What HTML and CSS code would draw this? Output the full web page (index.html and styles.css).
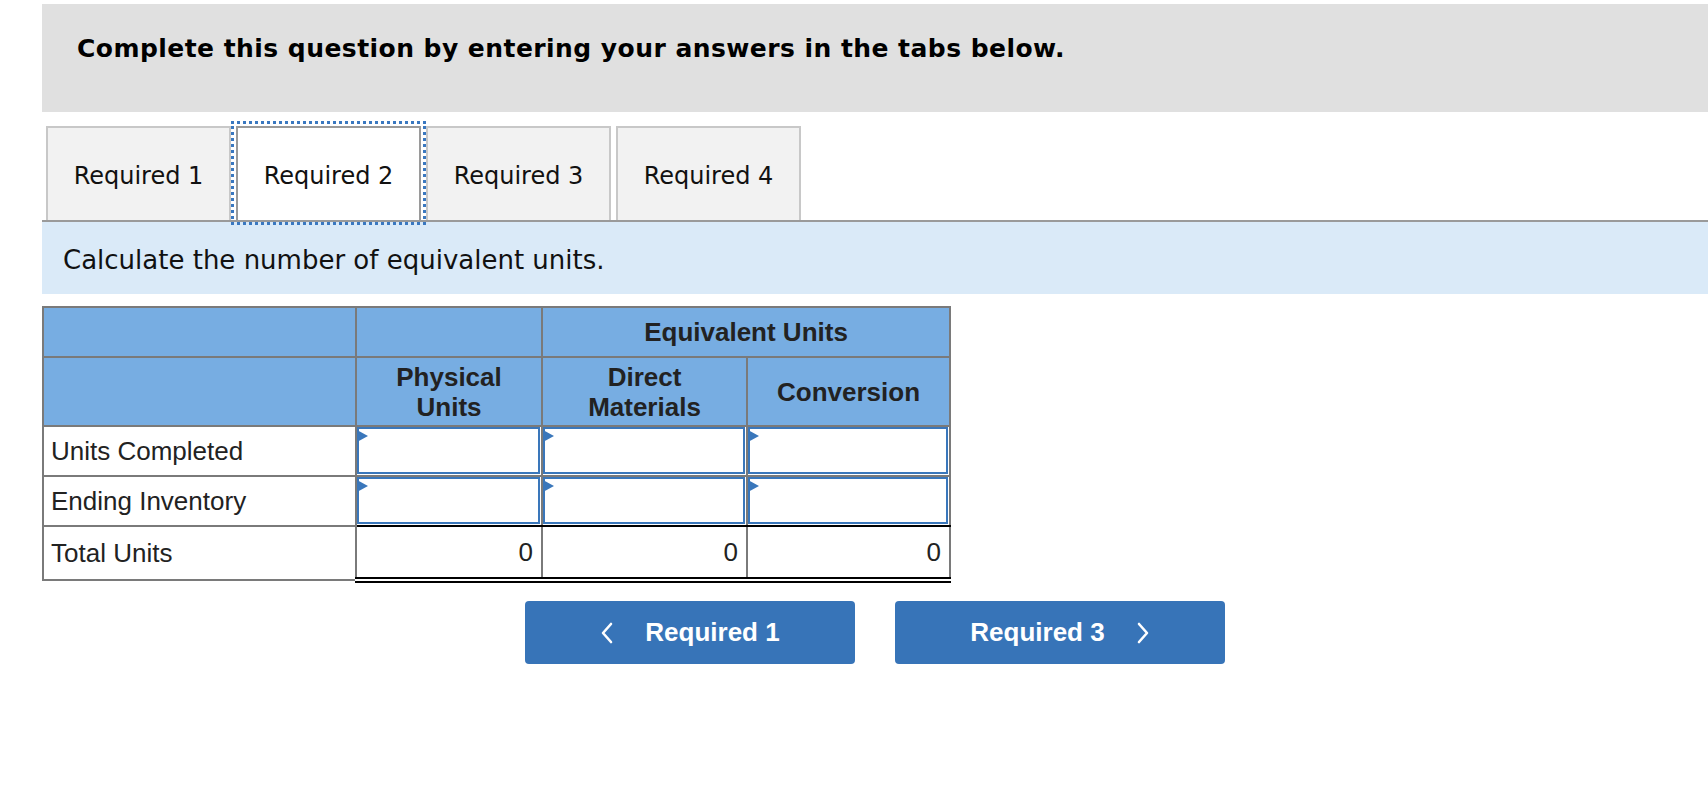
FILE: index.html
```html
<!DOCTYPE html>
<html lang="en">
<head>
<meta charset="utf-8">
<title>Equivalent units</title>
<link rel="stylesheet" href="styles.css">
</head>
<body>
<div class="page">
  <div class="banner">Complete this question by entering your answers in the tabs below.</div>

  <div class="tabs">
    <div class="tab">Required 1</div>
    <div class="tab active">Required 2</div>
    <div class="tab">Required 3</div>
    <div class="tab">Required 4</div>
  </div>

  <div class="band">Calculate the number of equivalent units.</div>

  <table class="eq">
    <colgroup>
      <col class="c1"><col class="c2"><col class="c3"><col class="c4">
    </colgroup>
    <tr class="h1">
      <th></th><th></th><th colspan="2">Equivalent Units</th>
    </tr>
    <tr class="h2">
      <th></th><th>Physical<br>Units</th><th>Direct<br>Materials</th><th>Conversion</th>
    </tr>
    <tr class="row">
      <td class="lbl">Units Completed</td>
      <td class="in"><div class="box"></div></td>
      <td class="in"><div class="box"></div></td>
      <td class="in"><div class="box"></div></td>
    </tr>
    <tr class="row last">
      <td class="lbl">Ending Inventory</td>
      <td class="in"><div class="box"></div></td>
      <td class="in"><div class="box"></div></td>
      <td class="in"><div class="box"></div></td>
    </tr>
    <tr class="tot">
      <td class="lbl">Total Units</td>
      <td class="num">0</td>
      <td class="num">0</td>
      <td class="num">0</td>
    </tr>
  </table>

  <div class="nav">
    <div class="btn">
      <svg class="chev" width="14" height="22" viewBox="0 0 14 22"><polyline points="11,2 3,11 11,20" fill="none" stroke="#fff" stroke-width="2.6" stroke-linecap="round" stroke-linejoin="round"/></svg>
      <span>Required 1</span>
    </div>
    <div class="btn">
      <span>Required 3</span>
      <svg class="chev" width="14" height="22" viewBox="0 0 14 22"><polyline points="3,2 11,11 3,20" fill="none" stroke="#fff" stroke-width="2.6" stroke-linecap="round" stroke-linejoin="round"/></svg>
    </div>
  </div>
</div>
</body>
</html>
```
FILE: styles.css
```css
html, body {
  margin: 0;
  padding: 0;
  background: #fff;
}

body {
  font-family: "DejaVu Sans", Verdana, sans-serif;
  color: #000;
}

.page {
  padding: 4px 0 0 42px;
}

.banner {
  background: #e0e0e0;
  height: 108px;
  box-sizing: border-box;
  padding: 30px 0 0 35px;
  font-weight: bold;
  font-size: 25px;
  letter-spacing: 0.45px;
  line-height: 30px;
}

.tabs {
  display: flex;
  gap: 5px;
  margin-top: 14px;
  padding-left: 4px;
  border-bottom: 2px solid #9a9a9a;
}

.tab {
  width: 185px;
  height: 94px;
  box-sizing: border-box;
  border: 2px solid #c8c8c8;
  border-bottom: none;
  background: #f2f2f2;
  font-size: 24px;
  color: #111;
  display: flex;
  align-items: center;
  justify-content: center;
  padding-top: 4px;
}

.tab.active {
  background: #fff;
  border-color: #9a9a9a;
  outline: 3px dotted #3a78c0;
  outline-offset: 2px;
}

.band {
  background: #daeaf8;
  height: 72px;
  box-sizing: border-box;
  padding: 3px 0 0 21px;
  display: flex;
  align-items: center;
  font-size: 26px;
  color: #111;
}

.eq {
  margin-top: 12px;
  border-collapse: collapse;
  table-layout: fixed;
  width: 907px;
  font-family: "Liberation Sans", Arial, sans-serif;
  font-size: 26px;
  color: #222;
  border: 2px solid #7a7a7a;
}

.c1 { width: 313px; }
.c2 { width: 186px; }
.c3 { width: 205px; }
.c4 { width: 203px; }

.eq th,
.eq td {
  border: 2px solid #7a7a7a;
  padding: 0;
}

.eq th {
  background: #77ade2;
  font-weight: bold;
  line-height: 30px;
  text-align: center;
  color: #222;
}

.h1 { height: 50px; }
.h2 { height: 69px; }
.row { height: 50px; }
.tot { height: 54px; }

.lbl {
  padding-left: 7px !important;
  text-align: left;
}

.in {
  padding: 0 1px 1px 0 !important;
  vertical-align: top;
}

.box {
  position: relative;
  height: 47px;
  box-sizing: border-box;
  border: 2px solid #3a77bb;
  background: #fff;
}

.box::before {
  content: "";
  position: absolute;
  left: -2px;
  top: 1px;
  border-left: 11px solid #3a77bb;
  border-top: 6px solid transparent;
  border-bottom: 6px solid transparent;
}

.last .in {
  border-bottom: 2px solid #000;
}

.num {
  text-align: right;
  padding-right: 8px !important;
  border-bottom: 6px double #000 !important;
}

.nav {
  display: flex;
  justify-content: center;
  gap: 40px;
  margin-top: 18px;
}

.btn {
  width: 330px;
  height: 63px;
  box-sizing: border-box;
  background: #3774b8;
  border-radius: 4px;
  color: #fff;
  font-family: "Liberation Sans", Arial, sans-serif;
  font-weight: bold;
  font-size: 26px;
  display: flex;
  align-items: center;
  justify-content: center;
  gap: 31px;
}

.chev {
  display: block;
}
```
